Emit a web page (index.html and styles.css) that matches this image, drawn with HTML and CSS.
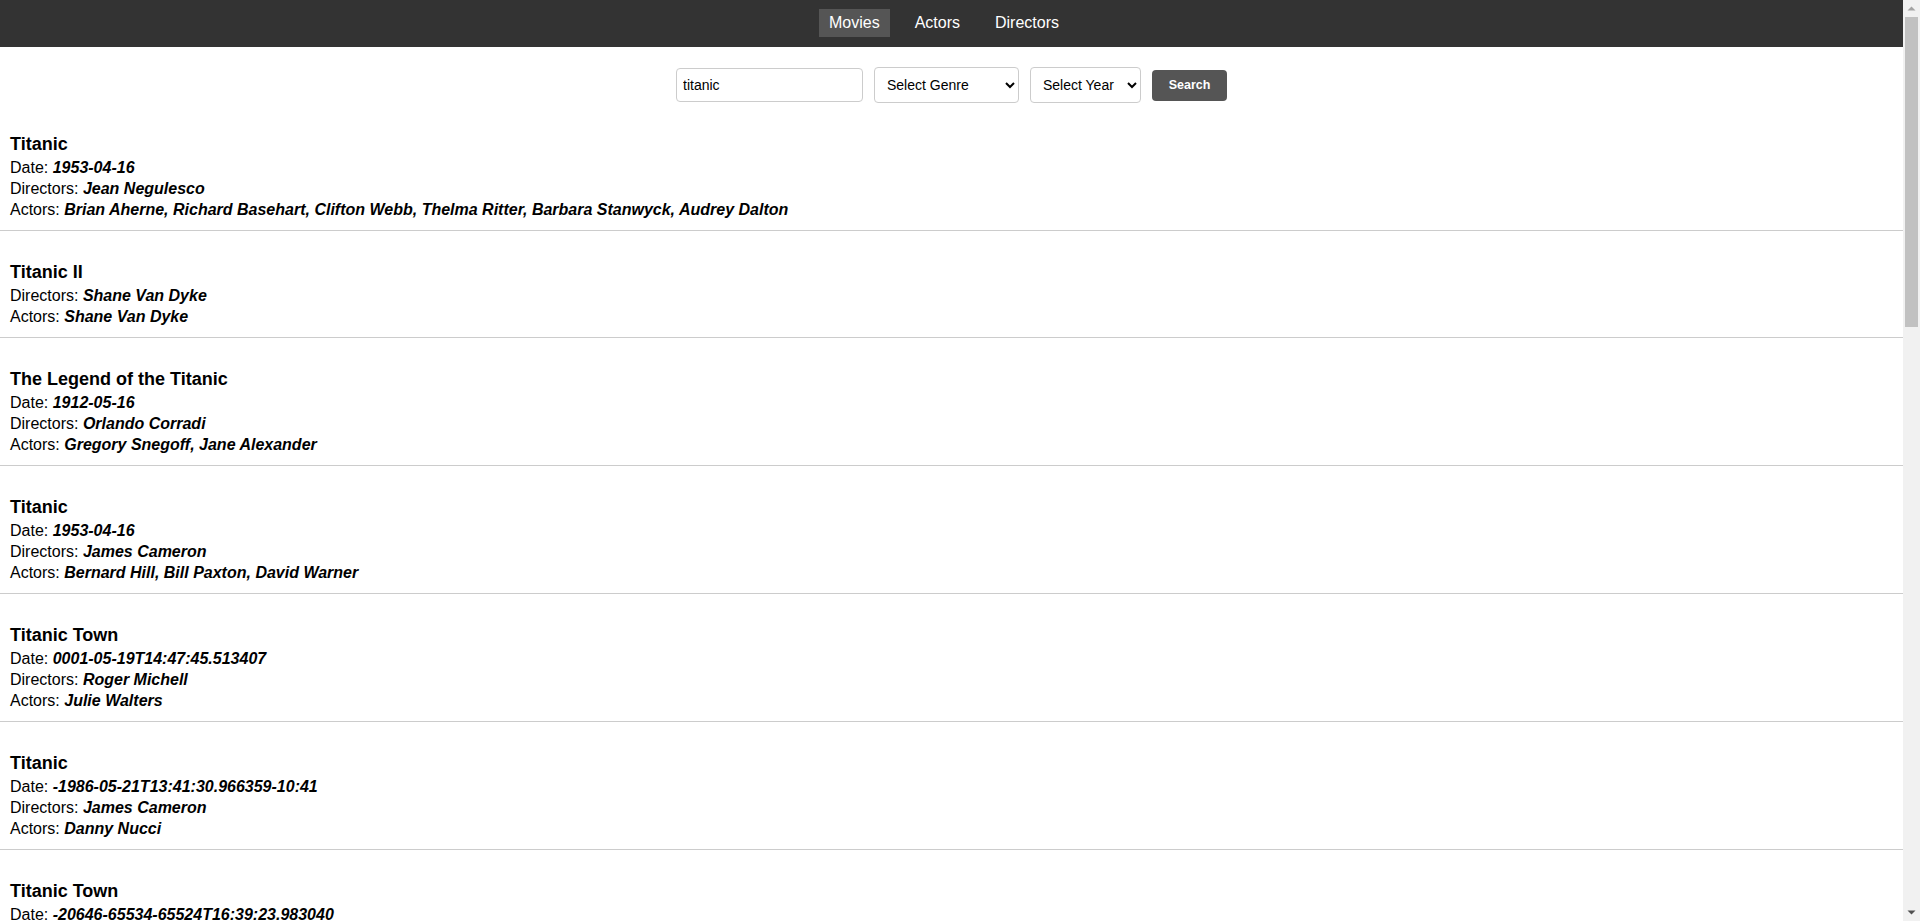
FILE: index.html
```html
<!DOCTYPE html>
<html lang="en">
<head>
<meta charset="utf-8">
<title>Movies</title>
<link rel="stylesheet" href="styles.css">
</head>
<body>
<div class="app">
  <div class="page">
    <nav class="topnav">
      <a class="navlink active" href="#">Movies</a>
      <a class="navlink" href="#">Actors</a>
      <a class="navlink" href="#">Directors</a>
    </nav>
    <form class="search">
      <input class="search-input" type="text" value="titanic">
      <select class="sel sel-genre"><option>Select Genre</option></select>
      <select class="sel sel-year"><option>Select Year</option></select>
      <button class="search-btn" type="button">Search</button>
    </form>
    <main class="list">
      <div class="movie">
        <div class="title">Titanic</div>
        <div class="row">Date: <span class="val">1953-04-16</span></div>
        <div class="row">Directors: <span class="val">Jean Negulesco</span></div>
        <div class="row">Actors: <span class="val">Brian Aherne, Richard Basehart, Clifton Webb, Thelma Ritter, Barbara Stanwyck, Audrey Dalton</span></div>
      </div>
      <div class="movie">
        <div class="title">Titanic II</div>
        <div class="row">Directors: <span class="val">Shane Van Dyke</span></div>
        <div class="row">Actors: <span class="val">Shane Van Dyke</span></div>
      </div>
      <div class="movie">
        <div class="title">The Legend of the Titanic</div>
        <div class="row">Date: <span class="val">1912-05-16</span></div>
        <div class="row">Directors: <span class="val">Orlando Corradi</span></div>
        <div class="row">Actors: <span class="val">Gregory Snegoff, Jane Alexander</span></div>
      </div>
      <div class="movie">
        <div class="title">Titanic</div>
        <div class="row">Date: <span class="val">1953-04-16</span></div>
        <div class="row">Directors: <span class="val">James Cameron</span></div>
        <div class="row">Actors: <span class="val">Bernard Hill, Bill Paxton, David Warner</span></div>
      </div>
      <div class="movie">
        <div class="title">Titanic Town</div>
        <div class="row">Date: <span class="val">0001-05-19T14:47:45.513407</span></div>
        <div class="row">Directors: <span class="val">Roger Michell</span></div>
        <div class="row">Actors: <span class="val">Julie Walters</span></div>
      </div>
      <div class="movie">
        <div class="title">Titanic</div>
        <div class="row">Date: <span class="val">-1986-05-21T13:41:30.966359-10:41</span></div>
        <div class="row">Directors: <span class="val">James Cameron</span></div>
        <div class="row">Actors: <span class="val">Danny Nucci</span></div>
      </div>
      <div class="movie">
        <div class="title">Titanic Town</div>
        <div class="row">Date: <span class="val">-20646-65534-65524T16:39:23.983040</span></div>
      </div>
    </main>
  </div>
  <div class="scrollbar">
    <div class="sb-btn">
      <svg width="9" height="5" viewBox="0 0 9 5"><polygon points="0.5,4.5 4.5,0.5 8.5,4.5" fill="#a3a3a3"/></svg>
    </div>
    <div class="sb-track">
      <div class="sb-thumb"></div>
    </div>
    <div class="sb-btn">
      <svg width="9" height="5" viewBox="0 0 9 5"><polygon points="0.5,0.5 8.5,0.5 4.5,4.5" fill="#505050"/></svg>
    </div>
  </div>
</div>
</body>
</html>
```
FILE: styles.css
```css
html, body {
  margin: 0;
  height: 100%;
  overflow: hidden;
}
body {
  font-family: "Liberation Sans", Arial, sans-serif;
  color: #000;
  background: #fff;
}
.app {
  display: flex;
  height: 100vh;
}
.page {
  flex: 1;
  min-width: 0;
  overflow: hidden;
}

.topnav {
  display: flex;
  justify-content: center;
  background: #333;
  padding: 9px 0 10px;
}
.navlink {
  display: block;
  color: #fff;
  text-decoration: none;
  font-size: 16px;
  line-height: 18px;
  padding: 5px 10px;
  margin-right: 15px;
}
.navlink.active {
  background: #555;
}

.search {
  display: flex;
  justify-content: center;
  align-items: center;
  gap: 11px;
  margin: 0;
  padding-top: 20px;
  height: 36px;
}
.search-input {
  box-sizing: border-box;
  width: 187px;
  height: 34px;
  border: 1px solid #ccc;
  border-radius: 4px;
  padding: 0 6px;
  font-family: "Liberation Sans", Arial, sans-serif;
  font-size: 14px;
  color: #000;
  outline: none;
}
.sel {
  box-sizing: border-box;
  height: 36px;
  border: 1px solid #ccc;
  border-radius: 4px;
  padding: 0 8px;
  background: #fff;
  font-family: "Liberation Sans", Arial, sans-serif;
  font-size: 14px;
  color: #000;
}
.sel-genre { width: 145px; }
.sel-year { width: 111px; }
.search-btn {
  box-sizing: border-box;
  width: 75px;
  height: 31px;
  border: none;
  border-radius: 4px;
  background: #555;
  color: #fff;
  font-family: "Liberation Sans", Arial, sans-serif;
  font-size: 12.5px;
  font-weight: bold;
  padding: 0;
}

.movie {
  padding: 10px;
  border-bottom: 1px solid #ccc;
}
.title {
  margin-top: 18px;
  font-size: 18px;
  font-weight: bold;
  line-height: 26px;
}
.row {
  font-size: 16px;
  line-height: 21px;
}
.val {
  font-weight: bold;
  font-style: italic;
}

.scrollbar {
  width: 17px;
  flex: none;
  background: #f1f1f1;
  display: flex;
  flex-direction: column;
}
.sb-btn {
  height: 17px;
  flex: none;
  display: flex;
  align-items: center;
  justify-content: center;
}
.sb-btn svg {
  display: block;
}
.sb-track {
  flex: 1;
}
.sb-thumb {
  height: 310px;
  margin: 0 2px;
  background: #c1c1c1;
}
```
